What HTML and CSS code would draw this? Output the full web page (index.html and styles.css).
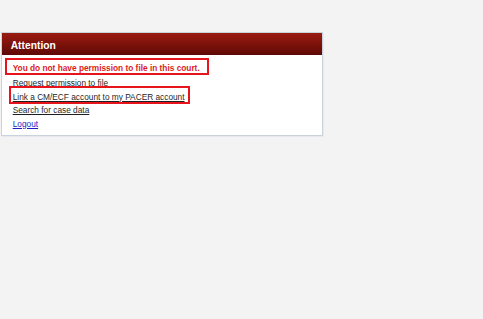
FILE: index.html
```html
<!DOCTYPE html>
<html lang="en">
<head>
<meta charset="utf-8">
<title>Attention</title>
<link rel="stylesheet" href="styles.css">
</head>
<body>
<div class="page">
  <div class="panel">
    <div class="panel-head">Attention</div>
    <div class="panel-body">
      <div class="row row-msg"><span class="box box-msg">You do not have permission to file in this court.</span></div>
      <div class="row"><a class="link" href="#">Request permission to file</a></div>
      <div class="row"><span class="box box-link"><a class="link" href="#">Link a CM/ECF account to my PACER account</a></span></div>
      <div class="row"><a class="link" href="#">Search for case data</a></div>
      <div class="row"><a class="link link-blue" href="#">Logout</a></div>
    </div>
  </div>
</div>
</body>
</html>
```
FILE: styles.css
```css
html, body {
  margin: 0;
  padding: 0;
}
body {
  background: #f3f3f3;
  font-family: "Liberation Sans", Arial, sans-serif;
  width: 483px;
  height: 319px;
  overflow: hidden;
}
.page {
  padding: 32px 0 0 1px;
}
.panel {
  width: 320px;
  background: #ffffff;
  border: 1px solid #c9d3dc;
  box-shadow: 1px 1px 0 #e6eaee;
}
.panel-head {
  height: 22px;
  box-sizing: border-box;
  padding: 2.5px 0 0 8.7px;
  line-height: 20px;
  font-size: 10.3px;
  font-weight: bold;
  color: #ffffff;
  background: linear-gradient(to bottom, #9a1c12 0%, #7d120b 50%, #5e0906 100%);
}
.panel-body {
  padding: 6.9px 0 3.9px 10.7px;
  font-size: 8.3px;
  line-height: 13.5px;
}
.row {
  white-space: nowrap;
}
.row-msg {
  margin-bottom: 1.7px;
}
.link {
  color: #1f1f1f;
  text-decoration: underline;
}
.link-blue {
  color: #1c1ccc;
}
.box {
  display: inline-block;
  line-height: 9.3px;
  border: 2px solid #e8141b;
  vertical-align: baseline;
}
.box-msg {
  color: #dc1a22;
  font-weight: bold;
  padding: 4.3px 7.5px 0 5.7px;
  margin: -6.3px -9.5px -2px -7.7px;
}
.box-link {
  padding: 4.7px 3px 0.3px 1.4px;
  margin: -6.7px -5px -2.3px -3.4px;
}
```
